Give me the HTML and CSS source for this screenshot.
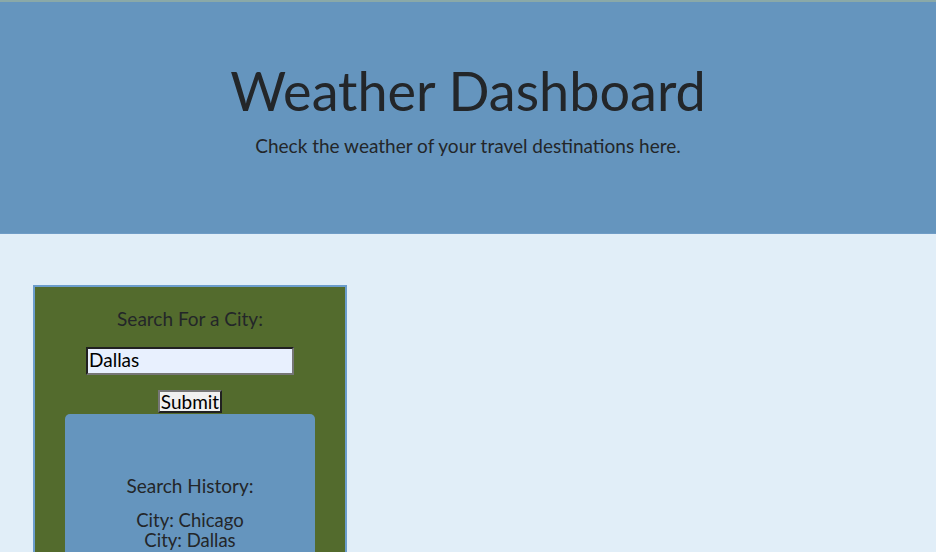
FILE: index.html
```html
<!DOCTYPE html>
<html>
<head>
<meta charset="utf-8">
<title>Weather Dashboard</title>
<link rel="stylesheet" href="styles.css">
</head>
<body>
<header class="hero">
  <h1 class="hero-title">Weather Dashboard</h1>
  <p class="hero-sub">Check the weather of your travel destinations here.</p>
</header>
<main class="content">
  <section class="search-panel">
    <label class="search-label" for="city">Search For a City:</label>
    <input class="search-input" id="city" type="text" value="Dallas">
    <button class="search-btn" type="button">Submit</button>
    <div class="history">
      <h2 class="history-title">Search History:</h2>
      <ul class="history-list">
        <li>City: Chicago</li>
        <li>City: Dallas</li>
      </ul>
    </div>
  </section>
</main>
</body>
</html>
```
FILE: styles.css
```css
* { box-sizing: border-box; }
html, body { margin: 0; padding: 0; }
body {
  background: #e1eef8;
  font-family: Lato, "Open Sans", sans-serif;
  color: #232629;
  height: 552px;
  overflow: hidden;
}
.hero {
  height: 234px;
  background: #6595be;
  border-top: 2px solid #8aa9a8;
  border-bottom: 1px solid #6f9cc6;
  display: flex;
  flex-direction: column;
  align-items: center;
  padding-top: 54px;
}
.hero-title {
  margin: 0;
  font-weight: 400;
  font-size: 54px;
  line-height: 70px;
}
.hero-sub {
  margin: 8px 0 0;
  font-size: 19px;
  line-height: 24px;
}
.content {
  padding: 51px 33px 0;
}
.search-panel {
  width: 314px;
  height: 267px;
  background: #536b2d;
  border: 2px solid #6b9dcc;
  border-bottom: none;
  display: flex;
  flex-direction: column;
  align-items: center;
  padding-top: 20px;
}
.search-label {
  font-size: 19px;
  line-height: 24px;
}
.search-input {
  margin-top: 16px;
  width: 208px;
  height: 28px;
  background: #e8f0fe;
  border: 2px inset #767676;
  font-family: Lato, sans-serif;
  font-size: 19px;
  line-height: 20px;
  padding: 0 1px 3px;
  color: #000;
}
.search-btn {
  margin-top: 15px;
  height: 23px;
  padding: 0 1px;
  background: #f0f0f0;
  border: 2px outset #767676;
  font-family: Lato, sans-serif;
  font-size: 19px;
  line-height: 18px;
  color: #000;
}
.history {
  margin-top: 1px;
  width: 250px;
  flex: 1;
  background: #6595be;
  border-radius: 5px 5px 0 0;
  display: flex;
  flex-direction: column;
  align-items: center;
  padding-top: 60px;
}
.history-title {
  margin: 0;
  font-weight: 400;
  font-size: 19px;
  line-height: 24px;
}
.history-list {
  list-style: none;
  margin: 12px 0 0;
  padding: 0;
  text-align: center;
  font-size: 18.5px;
  line-height: 20px;
}
```
